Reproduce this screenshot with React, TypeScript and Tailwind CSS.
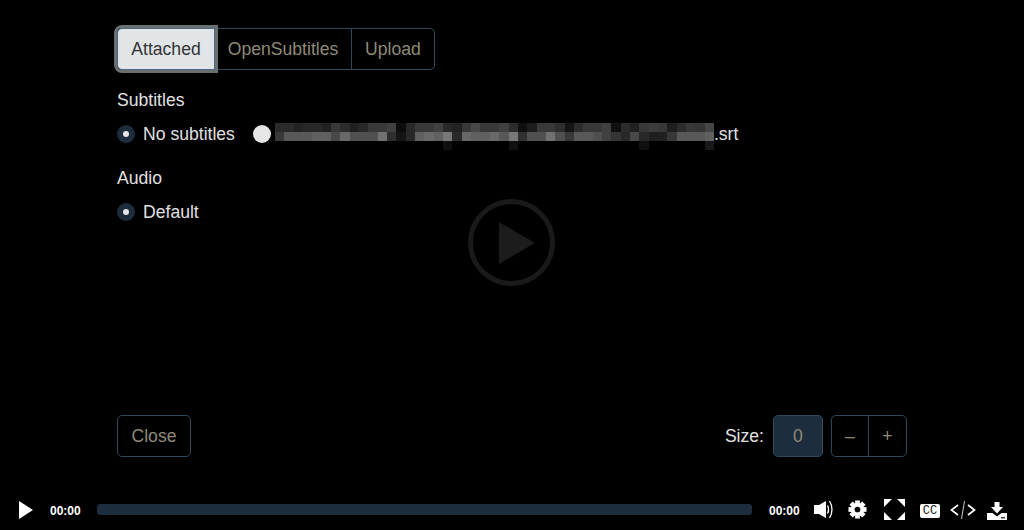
const rowA = [0x2a,0x2a,0x22,0x28,0x28,0x22,0x38,0x2c,0x20,0x28,0x38,0x38,0x40,0x0c,0x28,0x38,0x38,0x40,0x28,0x22,0x38,0x48,0x38,0x38,0x40,0x2c,0x10,0x1c,0x38,0x38,0x2e,0x14,0x2c,0x38,0x38,0x40,0x10,0x2c,0x20,0x38,0x3c,0x38,0x1e,0x2c,0x38,0x34,0x44];
const rowB = [0x38,0x58,0x58,0x58,0x60,0x60,0x48,0x68,0x50,0x50,0x50,0x70,0x2e,0x14,0x28,0x60,0x68,0x60,0x78,0x2a,0x68,0x60,0x60,0x68,0x58,0x78,0x30,0x50,0x50,0x70,0x50,0x38,0x58,0x58,0x50,0x40,0x34,0x28,0x48,0x28,0x1e,0x20,0x38,0x58,0x58,0x58,0x60];
const rowC = rowA.map((_, i) => ([18, 25, 39].includes(i) ? 0x10 : i === 46 ? 0x18 : 0));

const grey = (v: number) => `rgb(${v},${v},${v})`;

const Radio = ({ checked }: { checked?: boolean }) =>
  checked ? (
    <span className="w-[18px] h-[18px] rounded-full bg-[#1e2d3d] flex items-center justify-center shrink-0">
      <span className="w-[6px] h-[6px] rounded-full bg-[#e6e6e6]" />
    </span>
  ) : (
    <span className="block w-[18px] h-[18px] rounded-full bg-[#e6e6e6] shrink-0" />
  );

const BlurredName = () => (
  <div className="flex flex-col w-[439px] h-[27px]">
    {[rowA, rowB, rowC].map((row, r) => (
      <div key={r} className="flex h-[9px]">
        {row.map((v, i) => (
          <div key={i} className="flex-1" style={{ backgroundColor: grey(v) }} />
        ))}
      </div>
    ))}
  </div>
);

const Gear = () => (
  <svg className="ml-[14px]" width="19" height="19" viewBox="0 0 20 20" fill="#fff">
    {[0, 45, 90, 135].map((a) => (
      <rect key={a} x="7.5" y="0.5" width="5" height="19" transform={`rotate(${a} 10 10)`} />
    ))}
    <circle cx="10" cy="10" r="6.8" />
    <circle cx="10" cy="10" r="3" fill="#000" />
  </svg>
);

export default function App() {
  return (
    <div className="relative w-[1024px] h-[530px] bg-black overflow-hidden flex flex-col font-['Liberation_Sans',Arial,sans-serif] text-[17.6px] text-[#e0e0e0]">
      <div className="absolute left-[468px] top-[199px] w-[87px] h-[87px] rounded-full border-[5px] border-[#1a1a1a] flex items-center justify-center">
        <svg width="36" height="42" viewBox="0 0 36 42" className="ml-[10px]">
          <path d="M0 0L36 21L0 42Z" fill="#1c1c1c" />
        </svg>
      </div>

      <div className="relative flex-1 flex flex-col px-[117px] pt-[28px] pb-[33px]">
        <div className="flex h-[42px] w-[318px]">
          <button className="w-[98px] bg-[#e1e5e8] text-[#333] rounded-l-[5px] outline-[3px] outline-[#6a6f70] border border-[#4d6a80] z-10">
            Attached
          </button>
          <button className="w-[136px] border-y border-[#304a5c] text-[#8f8a78]">OpenSubtitles</button>
          <button className="flex-1 border border-[#304a5c] rounded-r-[5px] text-[#8f8a78]">Upload</button>
        </div>

        <div className="mt-[20px] leading-[20px]">Subtitles</div>
        <div className="flex items-center mt-[14px] h-[20px]">
          <Radio checked />
          <span className="ml-[8px]">No subtitles</span>
          <span className="ml-[18px]"><Radio /></span>
          <div className="ml-[4px] mt-[4px]"><BlurredName /></div>
          <span>.srt</span>
        </div>

        <div className="mt-[24px] leading-[20px]">Audio</div>
        <div className="flex items-center mt-[14px] h-[20px]">
          <Radio checked />
          <span className="ml-[8px]">Default</span>
        </div>

        <div className="mt-auto flex items-center justify-between">
          <button className="w-[74px] h-[42px] border border-[#304a5c] rounded-[5px] text-[#8f8a78]">Close</button>
          <div className="flex items-center">
            <span>Size:</span>
            <div className="ml-[9px] w-[50px] h-[42px] rounded-[5px] bg-[#1e2d3d] border border-[#304a5c] flex items-center justify-center text-[#8f8a78]">0</div>
            <div className="ml-[8px] flex w-[76px] h-[42px] border border-[#304a5c] rounded-[5px] text-[#8f8a78]">
              <span className="w-[37px] border-r border-[#304a5c] flex items-center justify-center">–</span>
              <span className="flex-1 flex items-center justify-center">+</span>
            </div>
          </div>
        </div>
      </div>

      <div className="relative h-[40px] flex items-center pl-[18px] text-white pb-[1px]">
        <svg width="16" height="18" viewBox="0 0 16 18"><path d="M1 0L15 9L1 18Z" fill="#fff" /></svg>
        <span className="ml-[16px] mt-[3px] text-[12px] font-bold w-[32px]">00:00</span>
        <div className="ml-[15px] w-[655px] h-[11px] rounded-[3px] bg-[#1e2d3d]" />
        <span className="ml-[17px] mt-[3px] text-[12px] font-bold w-[33px]">00:00</span>
        <svg className="ml-[11px]" width="21" height="21" viewBox="0 0 21 21" fill="none">
          <path d="M1 6H6L13 2V19L6 15H1Z" fill="#fff" />
          <path d="M14.5 6.5C15.8 9 15.8 12 14.5 14.5" stroke="#fff" strokeWidth="1.4" />
          <path d="M16.5 2C19.8 7 19.8 14 16.5 19" stroke="#fff" strokeWidth="1.3" />
        </svg>
        <Gear />
        <svg className="ml-[17px]" width="21" height="21" viewBox="0 0 21 21" fill="#fff">
          <path d="M0 0H8L0 8ZM21 0V8L13 0ZM0 21V13L8 21ZM21 21H13L21 13Z" />
        </svg>
        <div className="ml-[15px] mt-[2px] w-[20px] h-[14px] rounded-[2px] bg-white text-[#222] text-[12px] font-['Liberation_Mono',monospace] leading-[14px] text-center">CC</div>
        <svg className="ml-[10px]" width="26" height="20" viewBox="0 0 26 20" fill="none" stroke="#fff" strokeWidth="1.7">
          <path d="M8 5L1.5 10L8 15M18 5L24.5 10L18 15" />
          <path d="M14.5 1L11.5 19" strokeWidth="1.1" stroke="#bbb" />
        </svg>
        <svg className="ml-[11px] mt-[2px]" width="20" height="18" viewBox="0 0 20 18" fill="#fff">
          <path d="M7.5 0H12.5V5H16L10 11.5L4 5H7.5Z" />
          <path d="M0 11H5.5L10 14.5L14.5 11H20V18H0Z" />
          <rect x="14" y="15" width="4" height="1.4" fill="#333" />
        </svg>
      </div>
    </div>
  );
}
